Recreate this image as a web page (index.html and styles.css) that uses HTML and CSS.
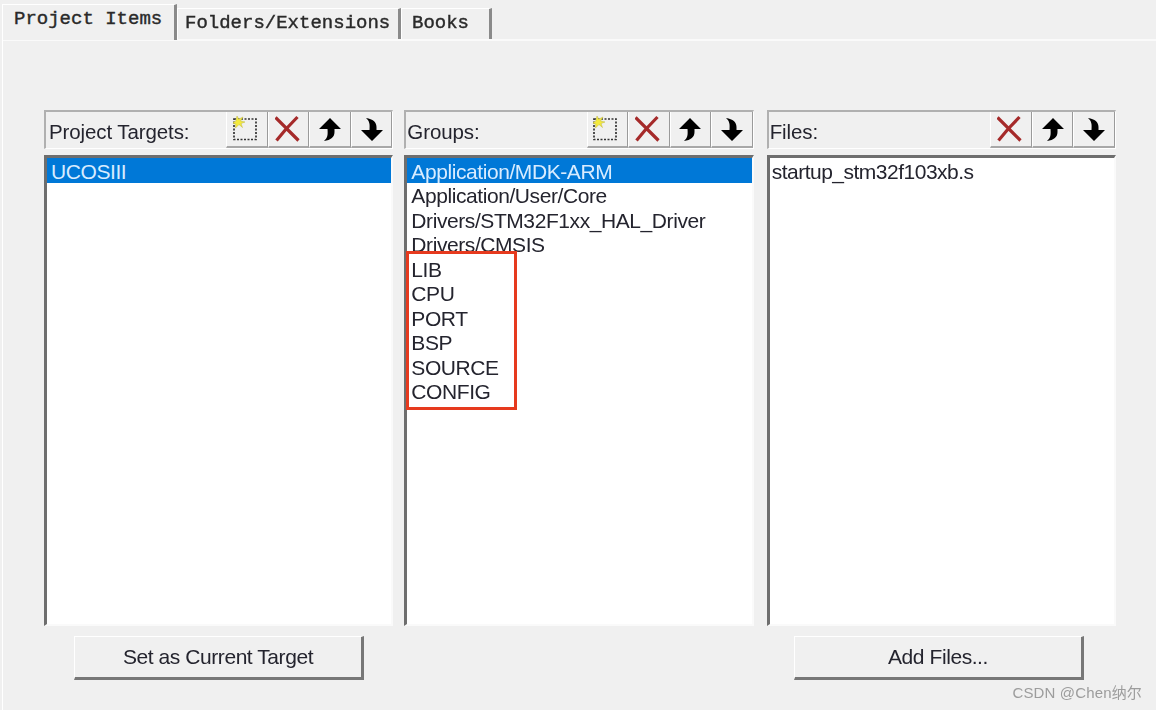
FILE: index.html
```html
<!DOCTYPE html>
<html lang="en">
<head>
<meta charset="utf-8">
<title>Manage Project Items</title>
<link rel="stylesheet" href="styles.css">
</head>
<body>
<svg class="defs" width="0" height="0" aria-hidden="true">
  <defs>
    <symbol id="i-new" viewBox="0 0 28 28">
      <rect x="1" y="4" width="22" height="20.500" fill="none" stroke="#333" stroke-width="1.700" stroke-dasharray="2 1.500"/>
      <path d="M4 1l1.800 3.200L10 2 7.500 6l4.500 1-4 1.500 1.500 4-3.500-3L2.500 13l.3-4L-1 8l3.800-1.800z" fill="#f4ea3e" stroke="#bdb43c" stroke-width=".5"/>
    </symbol>
    <symbol id="i-del" viewBox="0 0 28 28">
      <path d="M.5 2.500L11.500 13.500 22.500 2M11.500 13.500L1.500 25.500M11.500 13.500L23.500 25.500" fill="none" stroke="#a52a2a" stroke-width="3.200"/>
    </symbol>
    <symbol id="i-up" viewBox="0 0 28 28">
      <path d="M14 3L25 14H18.500V17C18.500 22 15 25 8 26C11.500 23 12 20 11.500 14H3z" fill="#000"/>
    </symbol>
    <symbol id="i-down" viewBox="0 0 28 28">
      <path d="M14 26L25 15H18.500V12C18.500 7 15 4 8 3C11.500 6 12 9 11.500 15H3z" fill="#000"/>
    </symbol>
  </defs>
</svg>
<div class="dialog">
  <div class="tabs">
    <div class="tab tab-active">Project Items</div>
    <div class="tab tab-folders">Folders/Extensions</div>
    <div class="tab tab-books">Books</div>
  </div>
  <div class="panel">
    <div class="columns">
      <section class="col">
        <div class="head">
          <span class="label">Project Targets:</span>
          <div class="tools">
            <span class="tool"><svg><use href="#i-new"/></svg></span>
            <span class="tool"><svg><use href="#i-del"/></svg></span>
            <span class="tool"><svg><use href="#i-up"/></svg></span>
            <span class="tool"><svg><use href="#i-down"/></svg></span>
          </div>
        </div>
        <ul class="list">
          <li class="selected">UCOSIII</li>
        </ul>
      </section>
      <section class="col">
        <div class="head">
          <span class="label">Groups:</span>
          <div class="tools">
            <span class="tool"><svg><use href="#i-new"/></svg></span>
            <span class="tool"><svg><use href="#i-del"/></svg></span>
            <span class="tool"><svg><use href="#i-up"/></svg></span>
            <span class="tool"><svg><use href="#i-down"/></svg></span>
          </div>
        </div>
        <ul class="list">
          <li class="selected">Application/MDK-ARM</li>
          <li>Application/User/Core</li>
          <li>Drivers/STM32F1xx_HAL_Driver</li>
          <li>Drivers/CMSIS</li>
          <li>LIB</li>
          <li>CPU</li>
          <li>PORT</li>
          <li>BSP</li>
          <li>SOURCE</li>
          <li>CONFIG</li>
          <li class="highlight" aria-hidden="true"></li>
        </ul>
      </section>
      <section class="col">
        <div class="head">
          <span class="label">Files:</span>
          <div class="tools">
            <span class="tool"><svg><use href="#i-del"/></svg></span>
            <span class="tool"><svg><use href="#i-up"/></svg></span>
            <span class="tool"><svg><use href="#i-down"/></svg></span>
          </div>
        </div>
        <ul class="list list-files">
          <li>startup_stm32f103xb.s</li>
        </ul>
      </section>
    </div>
    <div class="actions">
      <button class="btn btn-target" type="button">Set as Current Target</button>
      <button class="btn btn-files" type="button">Add Files...</button>
    </div>
  </div>
</div>
<div class="watermark">CSDN @Chen纳尔</div>
</body>
</html>
```
FILE: styles.css
```css
* { box-sizing: border-box; }
html, body { margin: 0; padding: 0; }
body {
  position: relative;
  width: 1156px;
  height: 710px;
  overflow: hidden;
  background: #f0f0f0;
  font-family: "Liberation Sans", Arial, sans-serif;
  color: #24242e;
}
.defs { position: absolute; }
.dialog {
  padding-top: 3px;
  filter: blur(0.6px);
}
.tabs {
  display: flex;
  align-items: flex-end;
  height: 36px;
  padding-left: 2px;
  font-family: "Liberation Mono", monospace;
  font-size: 19px;
  color: #2a2a2a;
}
.tab {
  height: 31px;
  padding: 2px 0 0 8px;
  background: #f0f0f0;
  border-top: 1px solid #fff;
  border-right: 3px solid #8a8a8a;
  box-shadow: inset 1px 0 0 #fff;
  white-space: nowrap;
  line-height: 24px;
  -webkit-text-stroke: 0.4px #2a2a2a;
}
.tab-active {
  width: 175px;
  height: 36px;
  padding: 2px 0 0 12px;
  margin-bottom: -1px;
  position: relative;
  z-index: 1;
}
.tab-folders { width: 224px; }
.tab-books { width: 91px; padding-left: 11px; }
.panel {
  height: 671px;
  margin-left: 2px;
  border-top: 2px solid #fafafa;
  border-left: 1px solid #fff;
  padding: 69px 40px 0 41px;
}
.columns {
  display: flex;
  gap: 11px;
}
.col {
  width: 350px;
  display: flex;
  flex-direction: column;
  gap: 6px;
}
.col:last-child { margin-left: 2px; }
.head {
  display: flex;
  align-items: center;
  justify-content: space-between;
  height: 39px;
  padding-left: 1px;
  border-top: 2px solid #b0b0b0;
  border-left: 2px solid #b0b0b0;
  border-right: 1px solid #fff;
  border-bottom: 1px solid #fff;
  font-size: 20.500px;
  letter-spacing: -0.100px;
}
.col:first-child .head { padding-left: 3px; }
.label { margin-top: 3px; }
.tools {
  display: flex;
  align-self: flex-end;
  height: 36px;
}
.tool {
  width: 41.500px;
  height: 36px;
  display: flex;
  align-items: center;
  justify-content: center;
  border-left: 1px solid #fff;
  border-right: 1px solid #9a9a9a;
  border-bottom: 2px solid #a8a8a8;
}
.tool svg { width: 28px; height: 28px; }
.list {
  position: relative;
  height: 471px;
  margin: 0;
  padding: 0;
  list-style: none;
  background: #fff;
  border-top: 3px solid #6e6e6e;
  border-left: 3px solid #6e6e6e;
  border-right: 2px solid #fafafa;
  border-bottom: 2px solid #fafafa;
  font-size: 21px;
  letter-spacing: -0.420px;
  line-height: 24.500px;
}
.list li {
  height: 24.500px;
  padding: 1.500px 0 0 4px;
  white-space: nowrap;
}
.list-files li { padding-left: 2px; letter-spacing: -0.500px; }
.list .selected {
  background: #0078d7;
  color: #d8ecff;
}
.list .highlight {
  position: absolute;
  left: -1px;
  top: 93px;
  width: 111px;
  height: 159px;
  padding: 0;
  border: 3px solid #e63a1e;
}
.actions {
  display: flex;
  justify-content: space-between;
  margin-top: 10px;
  padding: 0 32px 0 30px;
}
.btn {
  width: 290px;
  height: 44px;
  padding: 0;
  background: #f0f0f0;
  border-top: 1px solid #fff;
  border-left: 1px solid #fff;
  border-right: 3px solid #777;
  border-bottom: 3px solid #777;
  border-radius: 0;
  font-family: inherit;
  font-size: 21px;
  letter-spacing: -0.430px;
  color: #24242e;
}
.watermark {
  position: absolute;
  right: 14px;
  bottom: 8px;
  font-family: "Liberation Sans", "Noto Sans CJK SC", sans-serif;
  font-size: 15px;
  letter-spacing: 0.150px;
  color: #9c9c9c;
}
```
